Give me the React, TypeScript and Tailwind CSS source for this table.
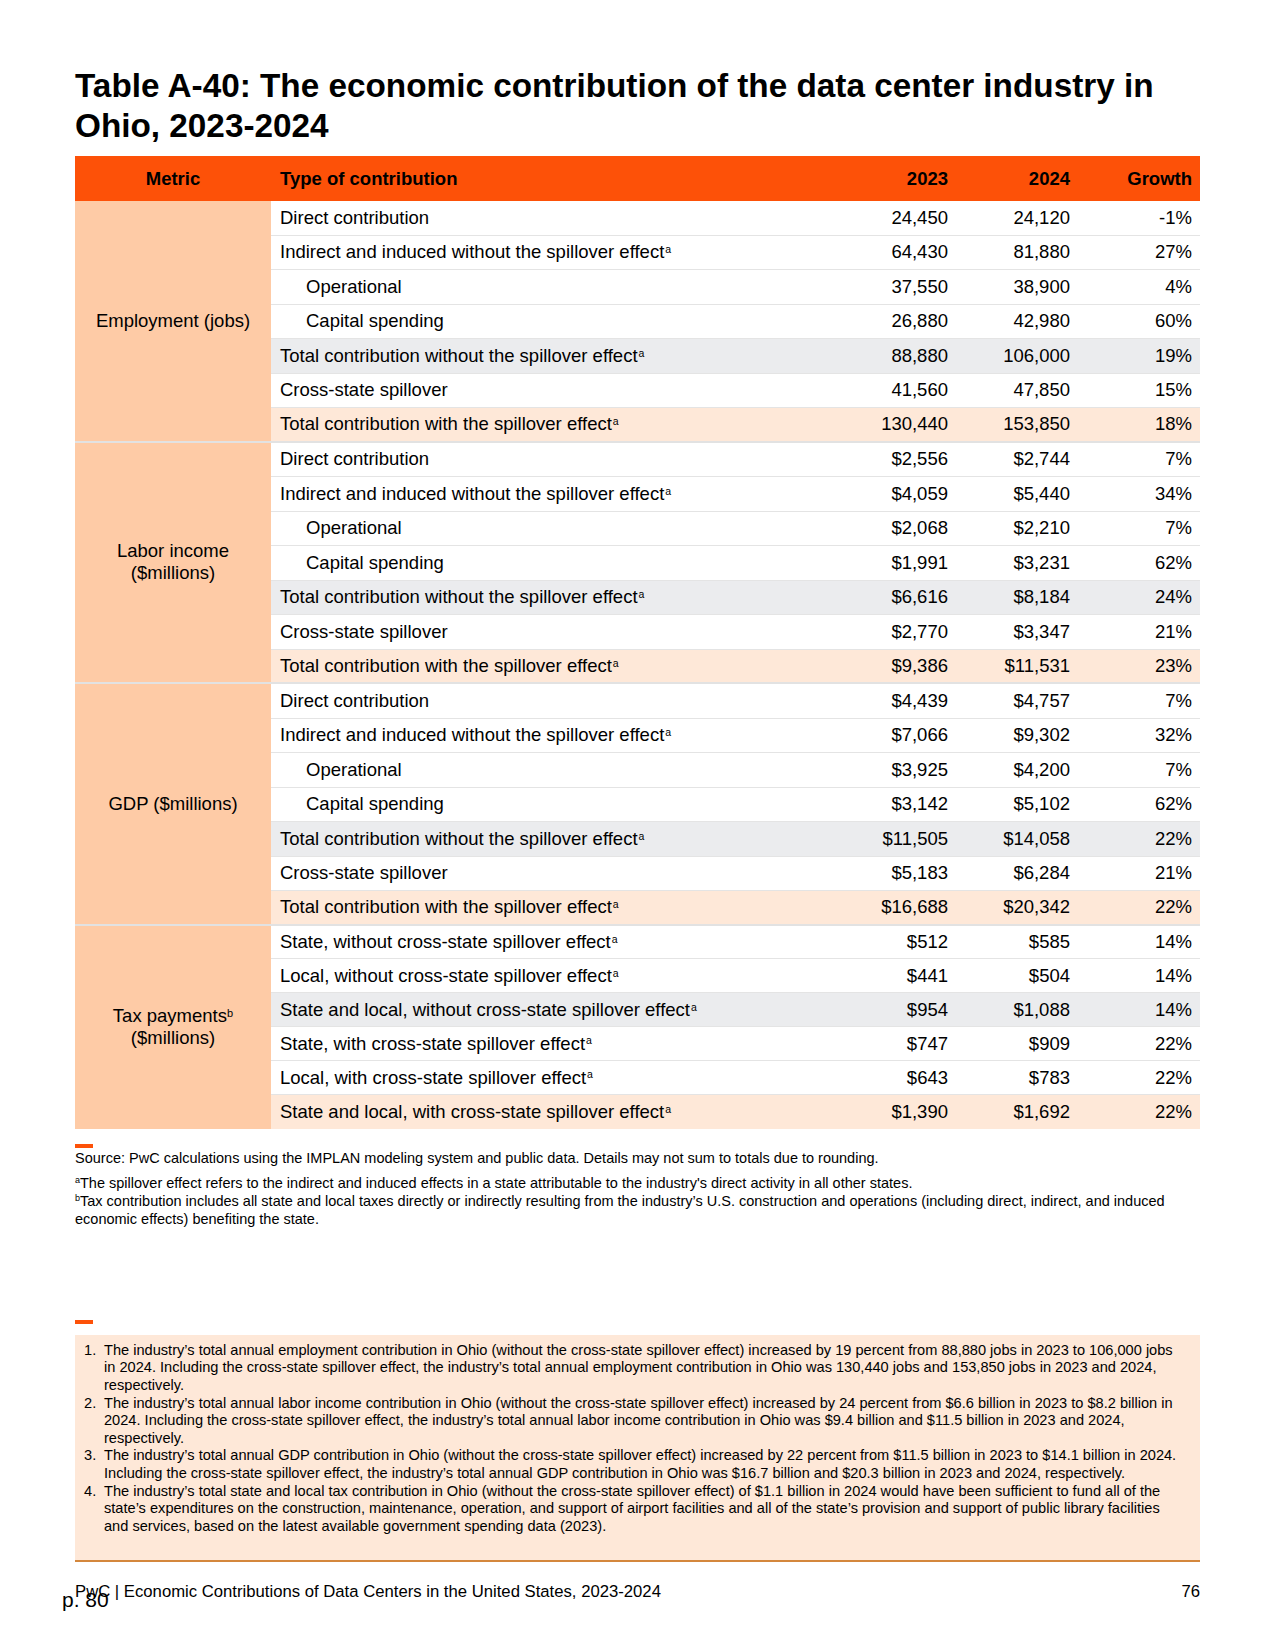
import React from "react";

type Row = {
  label: string;
  sup?: boolean;
  indent?: boolean;
  kind?: "gray" | "hl";
  v: [string, string, string];
};

type Group = { metric: React.ReactNode; rows: Row[]; short?: boolean };

const groups: Group[] = [
  {
    metric: <span>Employment (jobs)</span>,
    rows: [
      { label: "Direct contribution", v: ["24,450", "24,120", "-1%"] },
      { label: "Indirect and induced without the spillover effect", sup: true, v: ["64,430", "81,880", "27%"] },
      { label: "Operational", indent: true, v: ["37,550", "38,900", "4%"] },
      { label: "Capital spending", indent: true, v: ["26,880", "42,980", "60%"] },
      { label: "Total contribution without the spillover effect", sup: true, kind: "gray", v: ["88,880", "106,000", "19%"] },
      { label: "Cross-state spillover", v: ["41,560", "47,850", "15%"] },
      { label: "Total contribution with the spillover effect", sup: true, kind: "hl", v: ["130,440", "153,850", "18%"] },
    ],
  },
  {
    metric: (
      <span>
        Labor income
        <br />
        ($millions)
      </span>
    ),
    rows: [
      { label: "Direct contribution", v: ["$2,556", "$2,744", "7%"] },
      { label: "Indirect and induced without the spillover effect", sup: true, v: ["$4,059", "$5,440", "34%"] },
      { label: "Operational", indent: true, v: ["$2,068", "$2,210", "7%"] },
      { label: "Capital spending", indent: true, v: ["$1,991", "$3,231", "62%"] },
      { label: "Total contribution without the spillover effect", sup: true, kind: "gray", v: ["$6,616", "$8,184", "24%"] },
      { label: "Cross-state spillover", v: ["$2,770", "$3,347", "21%"] },
      { label: "Total contribution with the spillover effect", sup: true, kind: "hl", v: ["$9,386", "$11,531", "23%"] },
    ],
  },
  {
    metric: <span>GDP ($millions)</span>,
    rows: [
      { label: "Direct contribution", v: ["$4,439", "$4,757", "7%"] },
      { label: "Indirect and induced without the spillover effect", sup: true, v: ["$7,066", "$9,302", "32%"] },
      { label: "Operational", indent: true, v: ["$3,925", "$4,200", "7%"] },
      { label: "Capital spending", indent: true, v: ["$3,142", "$5,102", "62%"] },
      { label: "Total contribution without the spillover effect", sup: true, kind: "gray", v: ["$11,505", "$14,058", "22%"] },
      { label: "Cross-state spillover", v: ["$5,183", "$6,284", "21%"] },
      { label: "Total contribution with the spillover effect", sup: true, kind: "hl", v: ["$16,688", "$20,342", "22%"] },
    ],
  },
  {
    short: true,
    metric: (
      <span>
        Tax payments<sup className="text-[11px]">b</sup>
        <br />
        ($millions)
      </span>
    ),
    rows: [
      { label: "State, without cross-state spillover effect", sup: true, v: ["$512", "$585", "14%"] },
      { label: "Local, without cross-state spillover effect", sup: true, v: ["$441", "$504", "14%"] },
      { label: "State and local, without cross-state spillover effect", sup: true, kind: "gray", v: ["$954", "$1,088", "14%"] },
      { label: "State, with cross-state spillover effect", sup: true, v: ["$747", "$909", "22%"] },
      { label: "Local, with cross-state spillover effect", sup: true, v: ["$643", "$783", "22%"] },
      { label: "State and local, with cross-state spillover effect", sup: true, kind: "hl", v: ["$1,390", "$1,692", "22%"] },
    ],
  },
];

const notes = [
  "The industry\u2019s total annual employment contribution in Ohio (without the cross-state spillover effect) increased by 19 percent from 88,880 jobs in 2023 to 106,000 jobs in 2024. Including the cross-state spillover effect, the industry\u2019s total annual employment contribution in Ohio was 130,440 jobs and 153,850 jobs in 2023 and 2024, respectively.",
  "The industry\u2019s total annual labor income contribution in Ohio (without the cross-state spillover effect) increased by 24 percent from $6.6 billion in 2023 to $8.2 billion in 2024. Including the cross-state spillover effect, the industry\u2019s total annual labor income contribution in Ohio was $9.4 billion and $11.5 billion in 2023 and 2024, respectively.",
  "The industry\u2019s total annual GDP contribution in Ohio (without the cross-state spillover effect) increased by 22 percent from $11.5 billion in 2023 to $14.1 billion in 2024. Including the cross-state spillover effect, the industry\u2019s total annual GDP contribution in Ohio was $16.7 billion and $20.3 billion in 2023 and 2024, respectively.",
  "The industry\u2019s total state and local tax contribution in Ohio (without the cross-state spillover effect) of $1.1 billion in 2024 would have been sufficient to fund all of the state\u2019s expenditures on the construction, maintenance, operation, and support of airport facilities and all of the state\u2019s provision and support of public library facilities and services, based on the latest available government spending data (2023).",
];

export default function App() {
  return (
    <div
      className="relative w-[1275px] h-[1650px] bg-white text-black"
      style={{ fontFamily: '"Liberation Sans", Arial, Helvetica, sans-serif' }}
    >
      <div className="pl-[75px] pr-[75px] pt-[66px]">
        <h1 className="text-[33.3px] leading-[40px] font-bold">
          Table A-40: The economic contribution of the data center industry in
          <br />
          Ohio, 2023-2024
        </h1>

        {/* table */}
        <div className="mt-[10px] w-[1125px] text-[18.5px]">
          <div className="flex h-[45px] items-center bg-[#fd5108] font-bold">
            <div className="w-[196px] text-center">Metric</div>
            <div className="flex-1 pl-[9px]">Type of contribution</div>
            <div className="w-[122px] pr-[8px] text-right">2023</div>
            <div className="w-[122px] pr-[8px] text-right">2024</div>
            <div className="w-[122px] pr-[8px] text-right">Growth</div>
          </div>
          {groups.map((g, gi) => {
            const lastGroup = gi === groups.length - 1;
            return (
              <div key={gi} className="flex">
                <div
                  className={
                    "w-[196px] shrink-0 bg-[#fecba6] flex items-center justify-center text-center leading-[22px] " +
                    (lastGroup ? "" : "border-b-2 border-[#e2e2e2]")
                  }
                >
                  {g.metric}
                </div>
                <div className="flex-1">
                  {g.rows.map((r, ri) => {
                    const lastRow = ri === g.rows.length - 1;
                    return (
                      <div
                        key={ri}
                        className={
                          "flex items-center " +
                          (g.short ? "h-[33.9px] " : "h-[34.5px] ") +
                          (!lastRow
                            ? "border-b border-[#e4e4e4] "
                            : !lastGroup
                            ? "border-b-2 border-[#e2e2e2] "
                            : "") +
                          (r.kind === "gray"
                            ? "bg-[#ebecee]"
                            : r.kind === "hl"
                            ? "bg-[#fee8d8]"
                            : "bg-white")
                        }
                      >
                        <div className={"flex-1 " + (r.indent ? "pl-[35px]" : "pl-[9px]")}>
                          {r.label}
                          {r.sup && <sup className="text-[10.5px] ml-[1px]">a</sup>}
                        </div>
                        <div className="w-[122px] pr-[8px] text-right">{r.v[0]}</div>
                        <div className="w-[122px] pr-[8px] text-right">{r.v[1]}</div>
                        <div className="w-[122px] pr-[8px] text-right">{r.v[2]}</div>
                      </div>
                    );
                  })}
                </div>
              </div>
            );
          })}
        </div>

        {/* source */}
        <div className="mt-[15px] text-[14.5px] leading-[18px]">
          <div className="h-[4px] w-[18px] bg-[#fd5108]" />
          <div className="mt-[1px]">
            Source: PwC calculations using the IMPLAN modeling system and public data. Details may not sum to totals due to rounding.
          </div>
          <div className="mt-[7px]">
            <sup className="text-[9px]">a</sup>
            The spillover effect refers to the indirect and induced effects in a state attributable to the industry's direct activity in all other states.
          </div>
          <div>
            <sup className="text-[9px]">b</sup>
            Tax contribution includes all state and local taxes directly or indirectly resulting from the industry&rsquo;s U.S. construction and operations (including direct, indirect, and induced economic effects) benefiting the state.
          </div>
        </div>

        {/* notes */}
        <div className="mt-[92px] h-[4px] w-[18px] bg-[#fd5108]" />
        <div className="mt-[11px] w-[1125px] bg-[#fee8d8] border-b-2 border-[#d4873c] pl-[9px] pr-[20px] pt-[7px] pb-[25px] text-[14.6px] leading-[17.6px]">
          <ol className="list-none">
            {notes.map((n, i) => (
              <li key={i} className="flex">
                <span className="w-[20px] shrink-0">{i + 1}.</span>
                <span>{n}</span>
              </li>
            ))}
          </ol>
        </div>

        {/* footer */}
        <div className="mt-[20px] flex justify-between text-[16.7px] leading-[20px]">
          <span>PwC | Economic Contributions of Data Centers in the United States, 2023-2024</span>
          <span>76</span>
        </div>
      </div>
      <div className="absolute left-[62px] top-[1587px] text-[21px] leading-[26px]">p. 80</div>
    </div>
  );
}
